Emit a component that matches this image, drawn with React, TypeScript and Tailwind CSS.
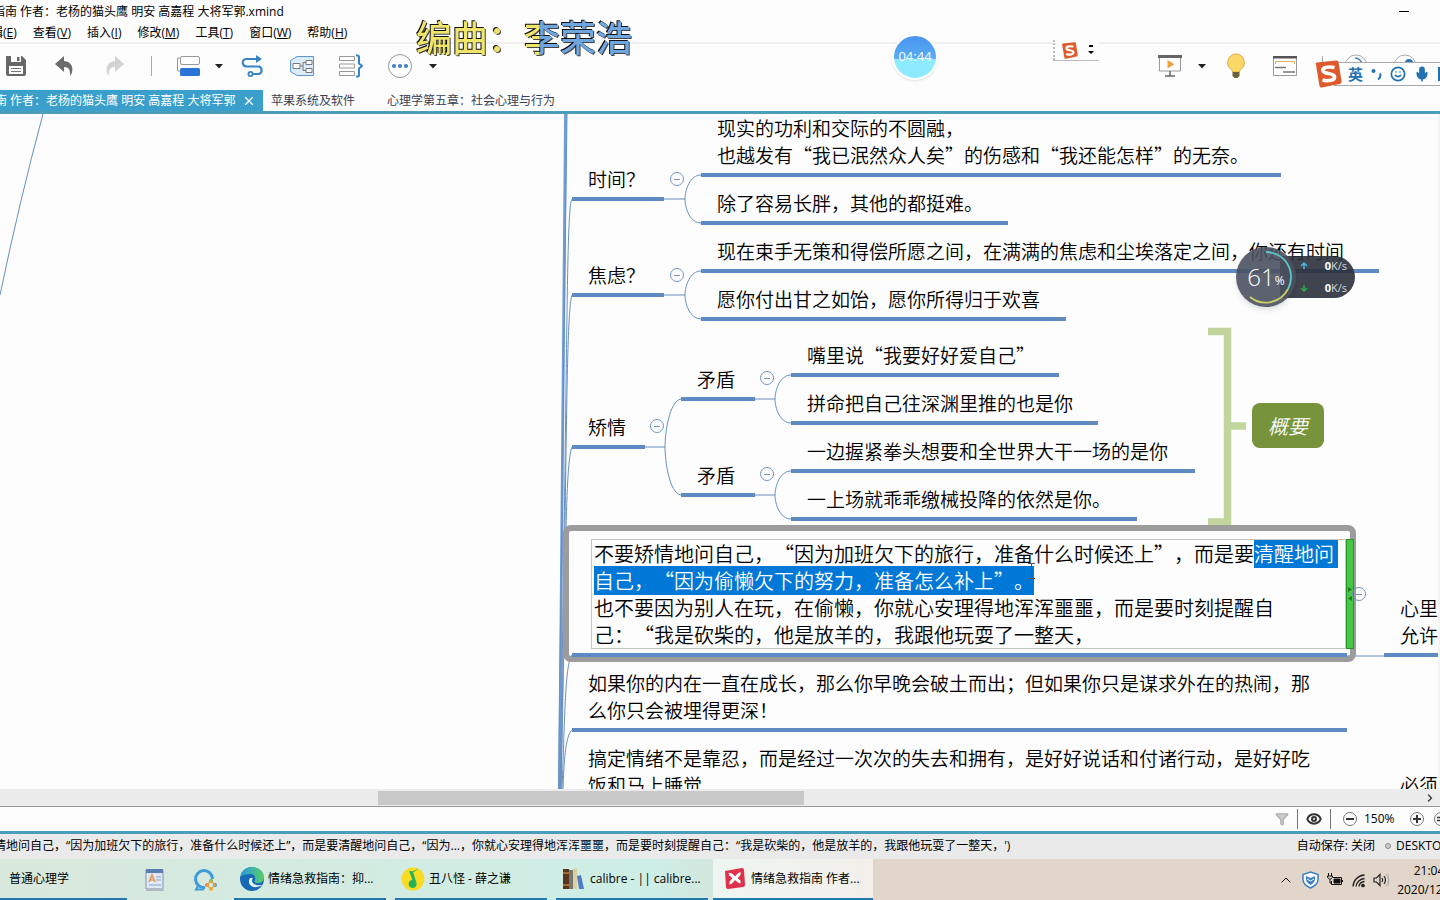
import { useEffect, useRef, useState } from 'react';
import { ChevronRight, ChevronUp, Eye, Filter, Mic, Smile, X } from 'lucide-react';

interface Topic {
  id: string;
  x: number;
  y: number;
  width: number;
  lines: string[];
  bar?: boolean;
}

// y is the top of the first text line, each line is 27px high
const topics: Topic[] = [
  { id: 'time', x: 572, y: 51, width: 92, lines: ['时间？'] },
  { id: 'time-1', x: 701, y: 0, width: 580, lines: ['现实的功利和交际的不圆融，', '也越发有“我已泯然众人矣”的伤感和“我还能怎样”的无奈。'] },
  { id: 'time-2', x: 701, y: 75, width: 307, lines: ['除了容易长胖，其他的都挺难。'] },
  { id: 'worry', x: 572, y: 147, width: 92, lines: ['焦虑？'] },
  { id: 'worry-1', x: 701, y: 123, width: 678, lines: ['现在束手无策和得偿所愿之间，在满满的焦虑和尘埃落定之间，你还有时间'] },
  { id: 'worry-2', x: 701, y: 171, width: 365, lines: ['愿你付出甘之如饴，愿你所得归于欢喜'] },
  { id: 'fuss', x: 572, y: 299, width: 73, lines: ['矫情'] },
  { id: 'fuss-1', x: 681, y: 251, width: 74, lines: ['矛盾'] },
  { id: 'fuss-2', x: 681, y: 347, width: 74, lines: ['矛盾'] },
  { id: 'fuss-1a', x: 791, y: 227, width: 268, lines: ['嘴里说“我要好好爱自己”'] },
  { id: 'fuss-1b', x: 791, y: 275, width: 307, lines: ['拼命把自己往深渊里推的也是你'] },
  { id: 'fuss-2a', x: 791, y: 323, width: 404, lines: ['一边握紧拳头想要和全世界大干一场的是你'] },
  { id: 'fuss-2b', x: 791, y: 371, width: 346, lines: ['一上场就乖乖缴械投降的依然是你。'] },
  { id: 'grow', x: 572, y: 555, width: 775, lines: ['如果你的内在一直在成长，那么你早晚会破土而出；但如果你只是谋求外在的热闹，那', '么你只会被埋得更深！'] },
  { id: 'mood', x: 572, y: 630, width: 775, lines: ['搞定情绪不是靠忍，而是经过一次次的失去和拥有，是好好说话和付诸行动，是好好吃', '饭和马上睡觉'], bar: false },
  { id: 'heart', x: 1384, y: 480, width: 75, lines: ['心里', '允许'] },
  { id: 'must', x: 1384, y: 657, width: 75, lines: ['必须'], bar: false },
];

const toggles = [
  { x: 677, y: 65 },
  { x: 677, y: 161 },
  { x: 657, y: 312 },
  { x: 767, y: 264 },
  { x: 767, y: 360 },
  { x: 1359, y: 480 },
];

const editing =
  '不要矫情地问自己，“因为加班欠下的旅行，准备什么时候还上”，而是要清醒地问自己，“因为偷懒欠下的努力，准备怎么补上”。\n也不要因为别人在玩，在偷懒，你就心安理得地浑浑噩噩，而是要时刻提醒自\n己：“我是砍柴的，他是放羊的，我跟他玩耍了一整天，';

const menus = [
  ['查看', 'V'],
  ['插入', 'I'],
  ['修改', 'M'],
  ['工具', 'T'],
  ['窗口', 'W'],
  ['帮助', 'H'],
];

function Caret() {
  return (
    <button aria-label="更多选项" className="flex w-[10px] justify-center">
      <svg width="8" height="5" viewBox="0 0 8 5"><path d="M0 0h8L4 4.5z" fill="#222" /></svg>
    </button>
  );
}

function SogouLogo({ size }: { size: number }) {
  return (
    <svg width={size} height={size} viewBox="0 0 28 28" className="shrink-0">
      <path d="M2 5 Q1 3 3 2.600 L22 .5 Q24 .2 24.500 2 L27.500 21 Q28 23.500 25.500 24 L8 27.500 Q6 28 5.500 26z" fill="#dc5a2c" />
      <path d="M20.500 7.500 C13 6 8 8 9 11 C10 14.500 19.500 12.500 20.500 16.500 C21.300 20.500 14 21.500 8.500 20" fill="none" stroke="#fff" strokeWidth="3.600" />
    </svg>
  );
}

function Toolbar() {
  return (
    <div className="flex h-12 shrink-0 items-center gap-[25px] border-t-2 border-[#efefef] pb-[2px] pl-1 pr-[23px]">
      <button aria-label="保存">
        <svg width="24" height="24" viewBox="0 0 24 24">
          <path d="M2 2h16l4 4v14a2 2 0 0 1-2 2H4a2 2 0 0 1-2-2z" fill="#686868" />
          <path d="M7 2h10v6H7z" fill="#fff" />
          <path d="M13 3h2.500v4H13z" fill="#686868" />
          <path d="M5 12h14v8H5z" fill="#fff" />
          <path d="M7 14.500h10M7 17.500h10" stroke="#777" />
        </svg>
      </button>
      <button aria-label="撤销">
        <svg width="24" height="24" viewBox="0 0 24 24"><path d="M2 10 11 2v5c8 0 11 9 6 15 .5-6-1-9-6-9v5z" fill="#6b6b6b" /></svg>
      </button>
      <button aria-label="重做">
        <svg width="24" height="24" viewBox="0 0 24 24"><path d="M22 10 13 2v5C5 7 2 16 7 22c-.5-6 1-9 6-9v5z" fill="#d3d3d3" /></svg>
      </button>
      <div className="h-5 w-px bg-[#aaa]" />
      <div className="-mr-2 flex items-center gap-[13px]">
        <button aria-label="主题">
          <svg width="24" height="24" viewBox="0 0 24 24">
            <path d="M3 4H.5v13H3" fill="none" stroke="#999" />
            <rect x="3.500" y="2.500" width="19" height="8" rx="1.500" fill="#fff" stroke="#999" />
            <rect x="3" y="14" width="20" height="8" rx="1.500" fill="#2b73d4" />
          </svg>
        </button>
        <Caret />
      </div>
      <button aria-label="联系">
        <svg width="24" height="24" viewBox="0 0 24 24" fill="none" stroke="#3585c5" strokeWidth="2.200">
          <path d="M17 5H5.500a3.500 3.500 0 0 0 0 7.500H18a4 4 0 0 1 0 7.500h-6" />
          <path d="M15 1l6 4-6 4z" fill="#3585c5" stroke="none" />
          <circle cx="9.500" cy="20" r="2.100" strokeWidth="1.800" />
        </svg>
      </button>
      <button aria-label="外框">
        <svg width="24" height="24" viewBox="0 0 24 24" fill="#dcebf8" stroke="#5b95cc">
          <path d="M7 2.500h16.500v19H7l-6.500-4v-11z" strokeLinejoin="round" />
          <path d="M3 9.500h7v5H3zM16 6.500h6v4h-6zM16 14.500h6v4h-6z" fill="#fff" stroke="#777" />
          <path d="M10 12h3M16 8.500h-3v8h3" fill="none" stroke="#777" />
        </svg>
      </button>
      <button aria-label="概要">
        <svg width="24" height="24" viewBox="0 0 24 24" fill="none">
          <path d="M.5 2.500h15v4H.5zM.5 10h15v4H.5zM.5 17.500h15v4H.5z" stroke="#999" />
          <path d="M17 1.500h1.500a1.500 1.500 0 0 1 1.500 1.500v6.500L23 12l-3 2.500V21a1.500 1.500 0 0 1-1.500 1.500H17" stroke="#3585c5" strokeWidth="2" />
        </svg>
      </button>
      <div className="flex items-center gap-4">
        <button aria-label="更多">
          <svg width="24" height="24" viewBox="0 0 24 24">
            <circle cx="12" cy="12" r="11.500" fill="#fff" stroke="#8e9aa5" />
            <circle cx="6" cy="12" r="2" fill="#3b7fbd" />
            <circle cx="12" cy="12" r="2" fill="#3b7fbd" />
            <circle cx="18" cy="12" r="2" fill="#3b7fbd" />
          </svg>
        </button>
        <Caret />
      </div>
      <div className="ml-auto flex items-center gap-[15px]">
        <button aria-label="演示">
          <svg width="24" height="24" viewBox="0 0 24 24">
            <path d="M1.500 3h21v14h-21z" fill="#fff" stroke="#999" />
            <path d="M0 1h24v3H0z" fill="#666" />
            <path d="M9.500 6v8.500l7-4.200z" fill="#e9a440" />
            <path d="M12 17v4.500M7 22h10" stroke="#666" strokeWidth="1.500" />
          </svg>
        </button>
        <Caret />
      </div>
      <button aria-label="头脑风暴" className="-ml-2">
        <svg width="24" height="26" viewBox="0 0 24 26">
          <path d="M12 1a8.500 8.500 0 0 0-5 15.200c1 .9 1.500 1.800 1.500 2.800h7c0-1 .5-1.900 1.500-2.800A8.500 8.500 0 0 0 12 1z" fill="#fbd968" stroke="#dda93a" />
          <path d="M8.500 19h7v4l-2 2h-3l-2-2z" fill="#6d6238" />
        </svg>
      </button>
      <button aria-label="格式">
        <svg width="24" height="24" viewBox="0 0 24 24">
          <path d="M.5 2.500h23v19H.5z" fill="#fff" stroke="#999" />
          <path d="M0 2h24v2.500H0z" fill="#555" />
          <path d="M2.500 10V7.500h19V10" stroke="#e3b064" fill="none" />
          <path d="M2 13.500h11M10 18h12" stroke="#777" strokeWidth="1.500" />
        </svg>
      </button>
      <div className="h-5 w-px bg-[#aaa]" />
      <button aria-label="账号" className="-ml-1">
        <svg width="24" height="24" viewBox="0 0 24 24" fill="none">
          <circle cx="12" cy="12" r="11" stroke="#aaa" />
          <path d="M11 4a7 7 0 0 1 7 7" stroke="#4a86b8" strokeWidth="1.500" />
        </svg>
      </button>
      <button aria-label="分享">
        <svg width="24" height="24" viewBox="0 0 24 24">
          <circle cx="12" cy="12" r="11" fill="#fff" stroke="#aaa" />
          <circle cx="16" cy="9" r="4" fill="#2f72b5" />
        </svg>
      </button>
    </div>
  );
}

function Connectors() {
  return (
    <svg className="absolute inset-0 size-full" fill="none" stroke="#6690bf" strokeWidth="1">
      <path d="M43 0Q20 85 0 181" />
      <path d="M565 0 559 675M566 0 560 675" stroke="#6f9dd6" strokeWidth="1.800" />
      <path d="M567 0 563.500 270 558.500 675" />
      <path d="M572 85C566 95 568 230 560 675" />
      <path d="M572 181C566 200 567 330 561 675" />
      <path d="M572 333C565 350 566 450 561 675" />
      <path d="M572 541C565 550 565 600 562 675" />
      <path d="M572 616C565 622 564 650 563 675" />
      <path d="M664 85H685M701 61C690 61 685 76 685 85S690 109 701 109" />
      <path d="M664 181H685M701 157C690 157 685 172 685 181S690 205 701 205" />
      <path d="M645 333H665M681 285C669 287 665 320 665 333S669 379 681 381" />
      <path d="M755 285H775M791 261C780 261 775 276 775 285S780 309 791 309" />
      <path d="M755 381H775M791 357C780 357 775 372 775 381S780 405 791 405" />
      <path d="M1347 542H1384" />
      <path d="M1208 217.500H1227.500V408H1208M1227.500 312H1246" stroke="#c1d59c" strokeWidth="7.500" />
    </svg>
  );
}

function TopicEditor() {
  const [text, setText] = useState(editing);
  const ref = useRef<HTMLTextAreaElement>(null);

  useEffect(() => {
    ref.current?.focus();
    ref.current?.setSelectionRange(editing.indexOf('清醒'), editing.indexOf('\n'));
  }, []);

  return (
    <div className="absolute left-[563px] top-[411px] flex h-[137px] w-[793px] items-start rounded-lg border-[6px] border-[#9c9c9c] pl-[22px] pt-2">
      <textarea
        ref={ref}
        aria-label="编辑主题"
        value={text}
        onChange={(e) => setText(e.target.value)}
        className="h-[110px] flex-1 resize-none overflow-hidden border border-[#c4c4c4] bg-[#fdfdfd] px-[2px] text-[20px] leading-[27px] outline-none selection:bg-[#0078d7] selection:text-white"
      />
      <div className="-mr-1 flex h-[110px] w-2 flex-col items-center justify-center gap-1 border border-[#279427] bg-[#45c845]">
        <svg width="4" height="5" viewBox="0 0 4 5"><path d="M0 0l4 2.500L0 5z" fill="#1f7c1f" /></svg>
        <svg width="4" height="5" viewBox="0 0 4 5"><path d="M4 0 0 2.500 4 5z" fill="#1f7c1f" /></svg>
      </div>
    </div>
  );
}

function Canvas() {
  return (
    <main className="relative flex-1 overflow-hidden border-r-2 border-[#f4f4f4] font-['Noto_Sans_CJK_SC',sans-serif] font-[350] [text-spacing-trim:space-all]">
      <Connectors />
      {topics.map((t) => (
        <div
          key={t.id}
          className={`absolute whitespace-nowrap px-4 pb-[5px] text-[19px] leading-[27px] ${t.bar === false ? '' : 'border-b-4 border-[#5f8bc2]'}`}
          style={{ left: t.x, top: t.y, width: t.width }}
        >
          {t.lines.map((line) => (
            <p key={line}>{line}</p>
          ))}
        </div>
      ))}
      <div className="absolute left-[1252px] top-[289px] rounded-lg bg-[#77943c] px-4 py-2 text-[20px] italic leading-[29px] text-white">
        概要
      </div>
      <TopicEditor />
      <div className="absolute left-[572px] top-[539px] h-1 w-[775px] bg-[#5f8bc2]" />
      {toggles.map((p) => (
        <button
          key={`${p.x}-${p.y}`}
          aria-label="折叠"
          className="absolute flex size-[14px] -translate-x-1/2 -translate-y-1/2 items-center justify-center rounded-full border border-[#7097c4]"
          style={{ left: p.x, top: p.y }}
        >
          <span className="h-px w-[6px] bg-[#7097c4]" />
        </button>
      ))}
      {/* I-beam pointer */}
      <svg className="absolute left-[1027px] top-[449px]" width="9" height="16" viewBox="0 0 9 16" fill="none" stroke="#555">
        <path d="M1 .5h7M4.500 1v14M1 15.500h7" />
      </svg>
    </main>
  );
}

function SpeedWidget() {
  return (
    <div className="absolute left-[1236px] top-[247px] flex items-center font-['Open_Sans',sans-serif]">
      <div className="relative z-10 flex size-[60px] items-center justify-center rounded-full bg-[#4b5160]/90 text-white shadow-md">
        <svg className="absolute inset-0" width="60" height="60" viewBox="0 0 60 60" fill="none" strokeWidth="1.800">
          <path d="M30 5A25 25 0 0 1 52 42" stroke="#5cc6c3" />
          <path d="M52 42A25 25 0 0 1 14 50" stroke="#c8d066" />
        </svg>
        <span className="text-2xl font-light">61</span>
        <span className="mt-2 text-xs">%</span>
      </div>
      <div className="-ml-4 flex h-[42px] w-[75px] flex-col justify-between rounded-r-full bg-[#2b303b]/90 py-[2px] pl-5 pr-2 text-[11px] leading-4 text-gray-300">
        <p className="flex items-center justify-between">
          <svg width="8" height="8" viewBox="0 0 8 8" fill="none" stroke="#4fb4e0" strokeWidth="1.500"><path d="M4 7V1M1 4l3-3 3 3" /></svg>
          <span><b className="text-white">0</b>K/s</span>
        </p>
        <p className="flex items-center justify-between">
          <svg width="8" height="8" viewBox="0 0 8 8" fill="none" stroke="#2faa4c" strokeWidth="1.500"><path d="M4 1v6M1 4l3 3 3-3" /></svg>
          <span><b className="text-white">0</b>K/s</span>
        </p>
      </div>
    </div>
  );
}

function InputMethod() {
  return (
    <>
      <div className="absolute left-[1053px] top-10 flex h-[21px] w-[46px] items-center gap-[6px] border-b border-[#bbb] bg-[#fdfdfd]">
        <span className="h-full border-l-2 border-dotted border-[#bbb]" />
        <SogouLogo size={17} />
        <svg className="ml-1" width="6" height="10" viewBox="0 0 6 10"><path d="M1 0h4v2H1zM0 6h6L3 9z" /></svg>
      </div>
      <div className="absolute right-0 top-[60px] flex h-7 w-[126px] items-center overflow-hidden">
        <div className="relative z-10 shrink-0"><SogouLogo size={28} /></div>
        <div className="-ml-2 flex h-6 flex-1 items-center gap-2 overflow-hidden border-y border-[#aaa] bg-white pl-[14px] text-[#2271b0]">
          <span className="text-[15px] font-bold">英</span>
          <svg className="shrink-0" width="11" height="12" viewBox="0 0 11 12">
            <circle cx="2.500" cy="3" r="2" fill="#2271b0" />
            <path d="M9 5.500q1.500 3.500-2 6" fill="none" stroke="#2271b0" strokeWidth="2" />
          </svg>
          <Smile className="size-4 shrink-0" strokeWidth={2.5} />
          <Mic className="size-4 shrink-0" fill="#2271b0" strokeWidth={2.5} />
          <svg className="shrink-0" width="16" height="14" viewBox="0 0 16 14" fill="none" stroke="#2271b0" strokeWidth="2">
            <path d="M1 1h14v12H1zM1 6h14M6 1v10" />
          </svg>
        </div>
      </div>
    </>
  );
}

function Taskbar() {
  return (
    <footer className="flex h-[41px] shrink-0 items-stretch overflow-hidden bg-linear-to-r from-[#d9e8dc] via-[#cdeee6] via-45% to-[#e2d5c9] to-62% text-xs">
      <button className="w-[127px] border-b-2 border-[#2378ae] pl-[9px] text-left">普通心理学</button>
      <button aria-label="记事" className="ml-[18px] flex w-[22px] items-center">
        <svg width="20" height="24" viewBox="0 0 20 24">
          <path d="M1 2h17v19H1z" fill="#dfe8f3" stroke="#7f93b4" />
          <path d="M1 1h17v4H1z" fill="#5a7db4" />
          <path d="M4 14 7 7l3 7M5 12h4" stroke="#e59a55" strokeWidth="1.600" fill="none" />
          <path d="M11 9h5M11 12h5M4 17h12" stroke="#88a3c8" />
          <path d="M2 20h16l1 3H1z" fill="#b0b9c5" />
        </svg>
      </button>
      <button aria-label="搜索" className="ml-[26px] flex w-6 items-center">
        <svg width="24" height="24" viewBox="0 0 24 24" fill="none">
          <path d="M12 19.500A8.500 8.500 0 1 1 19.500 11" stroke="#3f9bd8" strokeWidth="3" />
          <path d="M5 18l-2 3.500h8" stroke="#3f9bd8" strokeWidth="2" />
          <circle cx="18" cy="13" r="2" fill="#68b84a" />
          <circle cx="22" cy="17" r="2" fill="#4c90dd" />
          <circle cx="14" cy="17" r="2" fill="#ef7542" />
          <circle cx="18" cy="21" r="2" fill="#f0b53c" />
          <path d="m18 13 4 4-4 4-4-4z" stroke="#e2a74a" strokeWidth="1.500" />
        </svg>
      </button>
      <button className="ml-[17px] flex w-[152px] items-center gap-1 border-b-2 border-[#2378ae] pl-[6px]">
        <svg width="24" height="24" viewBox="0 0 24 24">
          <defs>
            <linearGradient id="edge" x1="0" x2="1"><stop stopColor="#2599e0" /><stop offset="1" stopColor="#5bcf67" /></linearGradient>
          </defs>
          <circle cx="12" cy="12" r="12" fill="#1769b5" />
          <path d="M.5 10C2 3 7 0 12 0c7 0 12 5 12 10 0 4-3 6-6 6-4 0-4-2-3-3 1-3-1-6-5-6C6 7 2 8 .5 10z" fill="url(#edge)" />
          <path d="M10 11c-3 5 1 10 7 9 3-.5 4-1 5-2-1-.2-5 1-8-1-2-1.500-3-4-1-6z" fill="#e4f3ee" />
        </svg>
        情绪急救指南：抑...
      </button>
      <button className="ml-[9px] flex w-[152px] items-center gap-1 border-b-2 border-[#2378ae] pl-[6px]">
        <svg width="24" height="24" viewBox="0 0 24 24">
          <circle cx="12" cy="12" r="11.500" fill="#f8db22" />
          <path d="M17 1q-1 3-5 4l3.500 11a4 4 0 1 1-4-3L8 4q6 1 9-3z" fill="#21b357" />
        </svg>
        丑八怪 - 薛之谦
      </button>
      <button className="ml-[9px] flex w-[152px] items-center gap-[6px] border-b-2 border-[#2378ae] pl-[6px]">
        <svg width="22" height="24" viewBox="0 0 22 24">
          <path d="M1 2h6v20H1z" fill="#59351f" />
          <path d="M1 6h6M1 18h6" stroke="#c07a3c" strokeWidth="1.500" />
          <path d="M7 3h4v19H7z" fill="#77776c" />
          <path d="m11 2 4-1v21h-4z" fill="#ddd0a0" />
          <path d="m15 9 4-1 3 14h-5z" fill="#4e7cc7" />
        </svg>
        calibre - || calibre...
      </button>
      <button className="ml-[5px] flex w-40 items-center gap-[6px] border-b-2 border-[#2378ae] bg-white/60 pl-[11px]">
        <svg width="21" height="21" viewBox="0 0 21 21">
          <path d="M1 3 18 0q2 0 2 2l1 15q0 2-2 2L4 21q-2 0-2-2z" fill="#e0314c" />
          <path d="M5 6.500c3-1 4 3.500 6 3.500s3-4.500 5.500-4M5.500 15c2 0 3.500-4 5.500-5 2 1 3.500 4 5.500 4" fill="none" stroke="#fff" strokeWidth="3.200" />
        </svg>
        情绪急救指南 作者...
      </button>
      <div className="ml-auto flex items-center">
        <ChevronUp className="size-4" strokeWidth={1.5} />
        <svg className="ml-2" width="17" height="18" viewBox="0 0 17 18">
          <path d="M8.500 1 16 3.500v5q0 5-7.500 8.500Q1 13.500 1 8.500v-5z" fill="#fff" stroke="#3a80c3" strokeWidth="1.500" />
          <path d="m4 5 4.500 2L13 5v4q-1 3-4.500 5Q5 12 4 9z" fill="#3a80c3" />
          <path d="m5 8 3.500 2L12 8" fill="none" stroke="#fff" />
        </svg>
        <svg className="ml-2" width="16" height="14" viewBox="0 0 16 14" fill="none" stroke="#111">
          <path d="M6 4.500h8.500v7h-10V8M15.500 7v2M1.500 0v3M4.500 0v3M.5 3h5v1.500L3 6.500.5 4.500zM3 6.500V10h2" />
          <path d="M7 6h6v4H7z" fill="#111" />
        </svg>
        <svg className="ml-2" width="16" height="16" viewBox="0 0 16 16" fill="none" stroke="#222" strokeWidth="1.300">
          <path d="M2 14.500A12 12 0 0 1 13.500 3M5 14.500A9 9 0 0 1 13.500 6.500M8 14.500A6 6 0 0 1 13.500 9.500" />
          <circle cx="12" cy="13.500" r="1.200" fill="#222" />
        </svg>
        <svg className="ml-[6px]" width="17" height="14" viewBox="0 0 17 14" fill="none" stroke="#222" strokeWidth="1.200">
          <path d="M1 5h2.500L7 1.500v11L3.500 9H1zM9 5q1.500 2 0 4M11 3q3 4 0 8" />
          <path d="M13.500 1q4.500 6 0 12" stroke="#aaa" />
        </svg>
        <div className="ml-[6px] w-[44px] overflow-hidden">
          <div className="w-[66px] text-center leading-[19px]">
            <p>21:04</p>
            <p>2020/12/26</p>
          </div>
        </div>
      </div>
    </footer>
  );
}

export default function App() {
  return (
    <div className="relative flex h-screen flex-col overflow-hidden bg-[#fdfdfd] font-['Open_Sans','Noto_Sans_CJK_SC',sans-serif] text-black [text-spacing-trim:space-all]">
      <header className="flex h-6 shrink-0 items-center justify-between pr-[31px] text-xs">
        <h1 className="-ml-[7px] whitespace-nowrap">指南 作者：老杨的猫头鹰 明安 高嘉程 大将军郭.xmind</h1>
        <button aria-label="最小化" className="flex h-full w-[10px] items-center pb-[2px]"><span className="h-px w-full bg-black" /></button>
      </header>
      <nav className="flex h-[18px] shrink-0 items-center gap-4 text-xs">
        <button className="-ml-[9px]">辑(<u>E</u>)</button>
        {menus.map(([label, hotkey]) => (
          <button key={label}>{label}(<u>{hotkey}</u>)</button>
        ))}
      </nav>
      <Toolbar />
      <div className="flex h-6 shrink-0 items-stretch overflow-hidden border-b-[3px] border-[#4d9fb9] text-xs text-gray-700">
        <div className="-ml-[5px] flex w-[268px] items-center justify-between bg-[#3b9fcb] pr-[7px] pt-px text-white">
          <button className="whitespace-nowrap">南 作者：老杨的猫头鹰 明安 高嘉程 大将军郭</button>
          <button aria-label="关闭"><X className="size-[14px]" /></button>
        </div>
        <button className="ml-2 pt-px">苹果系统及软件</button>
        <button className="ml-8 pt-px">心理学第五章：社会心理与行为</button>
      </div>
      <Canvas />
      <div className="flex h-[18px] shrink-0 items-center border-b border-[#999] bg-[#ececec]">
        <div className="ml-[26.25%] h-[14px] w-[29.6%] bg-[#c9c9c9]" />
        <button aria-label="向右滚动" className="ml-auto mr-1"><ChevronRight className="size-3" strokeWidth={3} color="#444" /></button>
      </div>
      <div className="flex h-6 shrink-0 items-center justify-end overflow-hidden text-xs">
        <button aria-label="筛选"><Filter className="size-[14px]" fill="#ccc" color="#aaa" /></button>
        <span className="ml-2 h-5 w-px bg-[#777]" />
        <button aria-label="显示" className="ml-2"><Eye className="size-4" strokeWidth={3} color="#333" /></button>
        <span className="mx-2 h-5 w-px bg-[#777]" />
        <button aria-label="缩小" className="ml-1 flex size-[14px] items-center justify-center rounded-full border border-[#777]"><span className="h-[2px] w-2 bg-[#333]" /></button>
        <span className="ml-[7px] w-[34px]">150%</span>
        <button aria-label="放大" className="ml-3">
          <svg width="14" height="14" viewBox="0 0 14 14" fill="none"><circle cx="7" cy="7" r="6.500" stroke="#777" /><path d="M3 7h8M7 3v8" stroke="#333" strokeWidth="2" /></svg>
        </button>
        <button aria-label="实际大小" className="-mr-2 ml-[10px]">
          <svg width="14" height="14" viewBox="0 0 14 14" fill="none"><circle cx="7" cy="7" r="6.500" stroke="#777" /><path d="M3 5.500h8M3 8.500h8" stroke="#333" strokeWidth="1.500" /></svg>
        </button>
      </div>
      <div className="flex h-7 shrink-0 items-center overflow-hidden whitespace-nowrap border-t-[3px] border-[#4a9dbb] bg-[#eaeaeb] pb-[2px] text-xs">
        <p className="-ml-[6px]">
          情地问自己，“因为加班欠下的旅行，准备什么时候还上”，而是要清醒地问自己，“因为...，你就心安理得地浑浑噩噩，而是要时刻提醒自己：“我是砍柴的，他是放羊的，我跟他玩耍了一整天，')
        </p>
        <span className="ml-auto">自动保存: 关闭</span>
        <span className="ml-[10px] mr-[5px] size-[6px] rounded-full border border-[#888] bg-[#ccc]" />
        <span className="w-[44px] overflow-hidden">DESKTOP</span>
      </div>
      <Taskbar />

      <div className="absolute left-[416px] top-[10px] font-['Noto_Sans_CJK_SC',sans-serif] text-4xl leading-[52px] font-medium [filter:drop-shadow(-1px_-1px_0_#111)_drop-shadow(1px_1px_0_#444)]">
        <p className="bg-linear-to-r from-[#efe56c] from-57% to-[#6fa6e0] to-57% bg-clip-text text-transparent">编曲：李荣浩</p>
      </div>
      <div className="absolute left-[892px] top-[34px] flex size-[46px] items-center justify-center rounded-full border-2 border-white bg-linear-to-b from-[#4b93ee] via-[#58aef4] via-55% to-[#8eeafd] to-55% text-[13px] text-white shadow">
        04:44
      </div>
      <InputMethod />
      <SpeedWidget />
    </div>
  );
}
